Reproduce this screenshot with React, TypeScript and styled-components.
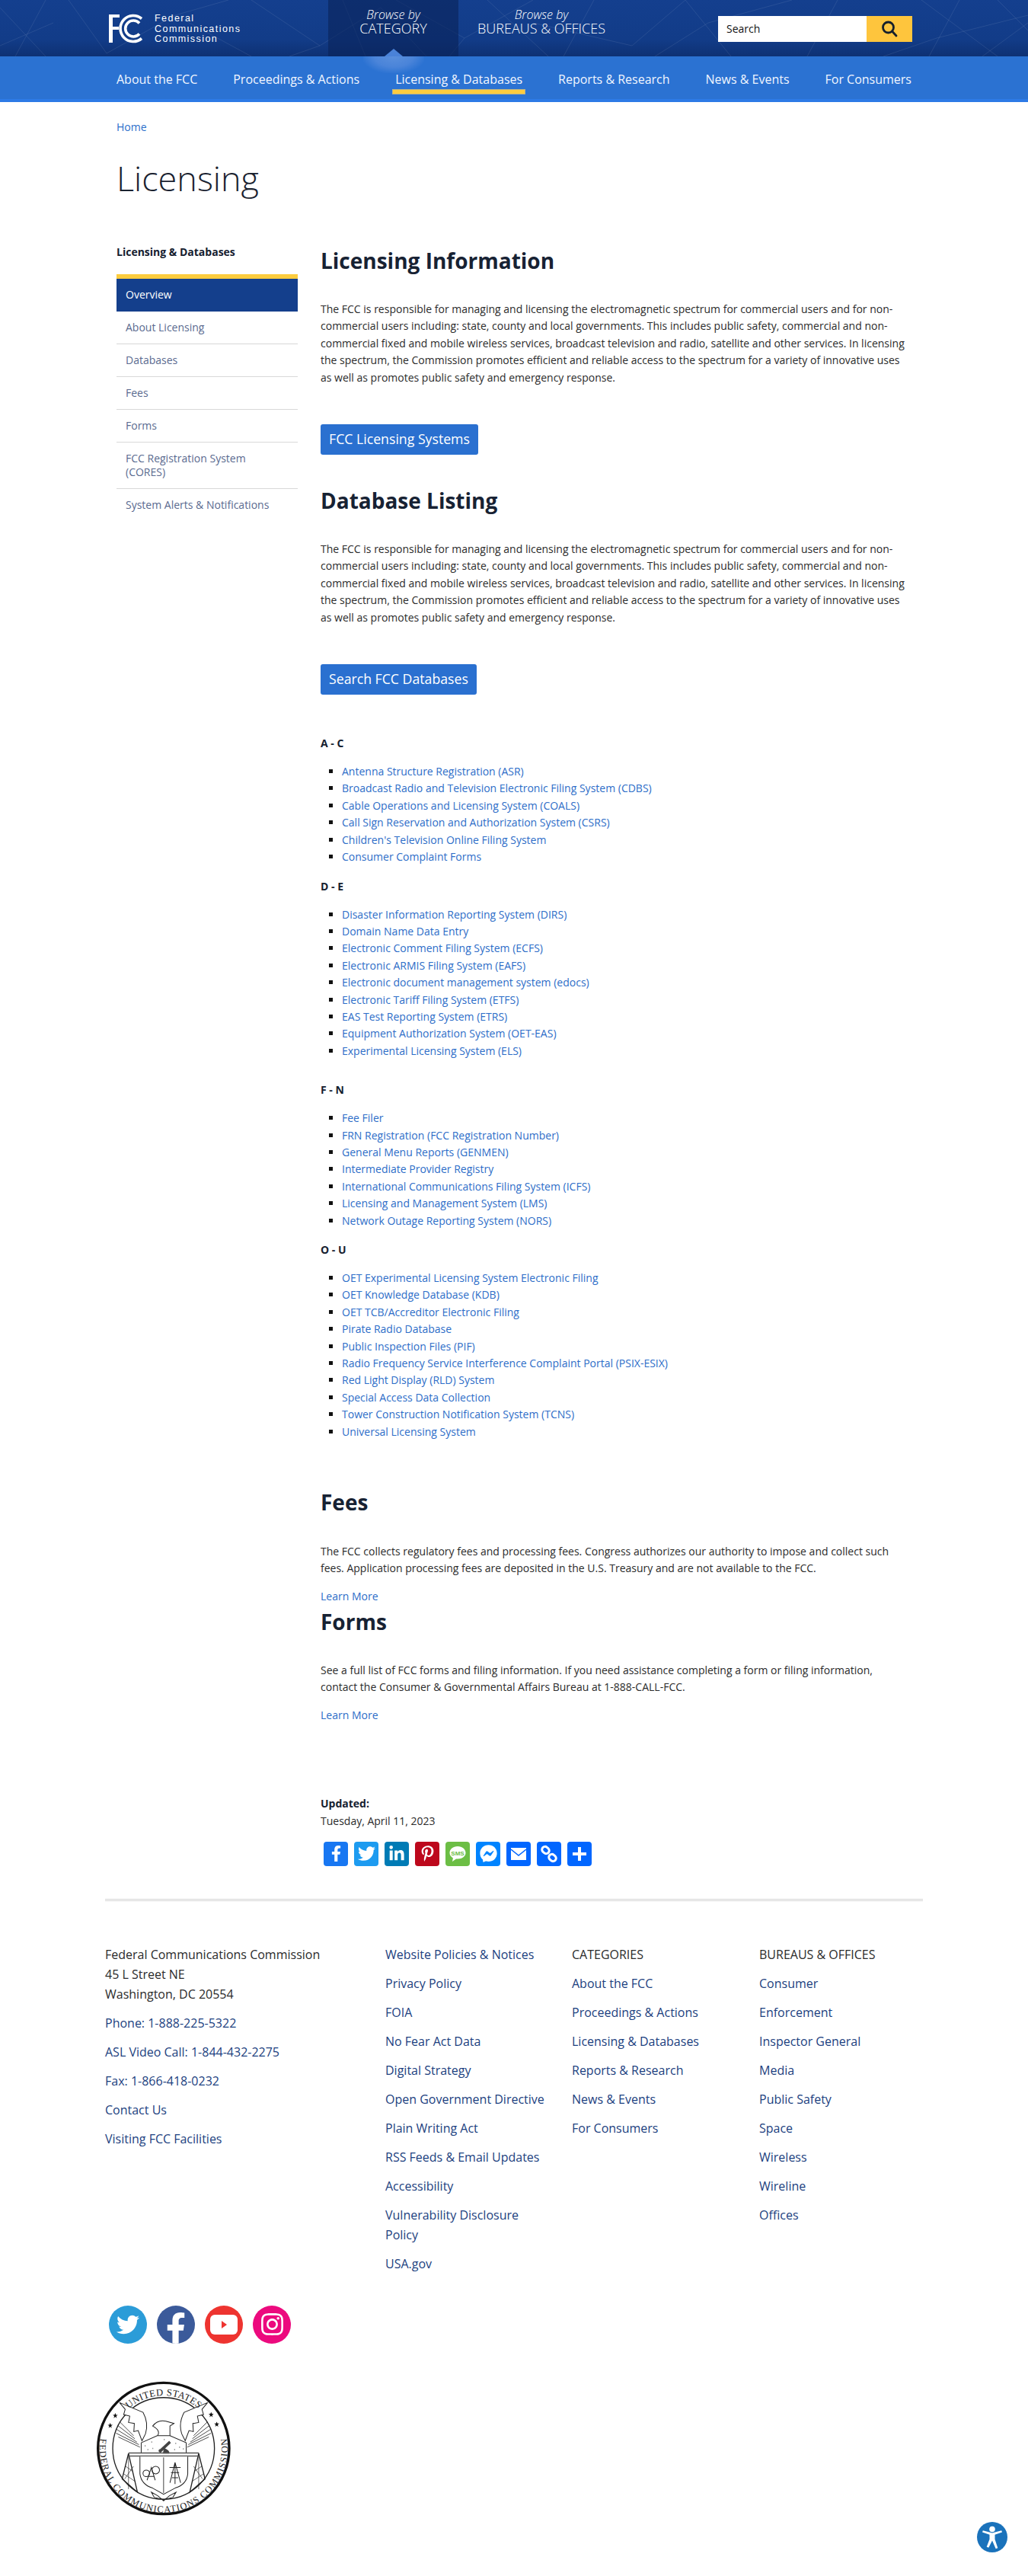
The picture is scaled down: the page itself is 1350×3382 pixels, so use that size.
import styled, { createGlobalStyle } from 'styled-components'
import { FaFacebookF, FaTwitter, FaLinkedinIn, FaPinterestP, FaFacebookMessenger, FaInstagram } from 'react-icons/fa'

const GlobalStyle = createGlobalStyle`
	html, body {
		margin: 0;
		padding: 0;
		background: #fff;
		font-family: 'Open Sans', sans-serif;
		font-size: 14px;
		line-height: 22.4px;
		color: #2b2b2b;
	}
	a {
		text-decoration: none;
		color: inherit;
	}
	ul {
		margin: 0;
		padding: 0;
	}
`

const Page = styled.div`
	width: 1350px;
	height: 3382px;
	overflow: hidden;
`

const TopBar = styled.header`
	position: relative;
	height: 74px;
	background: linear-gradient(180deg, #143f8e 0%, #123c88 70%, #0e3173 100%);
	display: flex;
	align-items: flex-start;
	overflow: hidden;
`

const Mesh = styled.svg`
	position: absolute;
	top: 0;
	left: 0;
`

const Logo = styled.a`
	position: relative;
	display: flex;
	gap: 14px;
	margin: 18px 0 0 143px;
	width: 288px;
	flex: none;
`

const LogoText = styled.div`
	font-family: 'Liberation Sans', sans-serif;
	font-size: 12.5px;
	line-height: 13.5px;
	letter-spacing: 1.45px;
	color: #fff;
`

const BrowseTab = styled.a<{ $active?: boolean }>`
	position: relative;
	flex: none;
	width: ${({ $active }) => ($active ? '171px' : '218px')};
	height: 74px;
	display: flex;
	flex-direction: column;
	align-items: center;
	padding-top: 9px;
	box-sizing: border-box;
	color: #fff;
	background: ${({ $active }) => ($active ? 'rgba(10, 36, 90, 0.62)' : 'transparent')};
`

const BrowseBy = styled.span`
	font-size: 16px;
	line-height: 20px;
	font-style: italic;
	font-weight: 300;
`

const BrowseName = styled.span`
	font-size: 18px;
	line-height: 17px;
	font-weight: 300;
	white-space: nowrap;
`

const TabArrow = styled.span`
	position: absolute;
	left: 50%;
	bottom: 0;
	margin-left: -12px;
	border-left: 12px solid transparent;
	border-right: 12px solid transparent;
	border-bottom: 10px solid #4a82d8;
`

const SearchBox = styled.form`
	position: relative;
	display: flex;
	width: 255px;
	height: 34px;
	margin: 21px 0 0 123px;
	flex: none;
`

const SearchField = styled.div`
	flex: 1;
	background: #fff;
	color: #111;
	font-size: 14px;
	line-height: 34px;
	padding-left: 11px;
`

const SearchButton = styled.button`
	width: 60px;
	border: 0;
	padding: 0;
	background: #fec53d;
	display: flex;
	align-items: center;
	justify-content: center;
`

const MainNav = styled.nav`
	position: relative;
	height: 60px;
	background: #2b72d2;
	border-bottom: 4px solid #2d7ae6;
	box-sizing: border-box;
	display: flex;
	justify-content: space-between;
	padding: 0 153px;
`

const NavGlow = styled.span`
	position: absolute;
	left: 477px;
	top: 0;
	width: 80px;
	height: 22px;
	background: radial-gradient(ellipse at 50% 0%, #5a8fdc 0%, #4a84d9 45%, rgba(43, 114, 210, 0) 75%);
`

const NavLink = styled.a<{ $active?: boolean }>`
	position: relative;
	font-size: 16px;
	line-height: 22px;
	padding-top: 19px;
	color: #f1f6ff;
	white-space: nowrap;

	${({ $active }) =>
		$active &&
		`
		&::after {
			content: '';
			position: absolute;
			left: -4px;
			right: -4px;
			top: 43px;
			height: 5px;
			background: #fdcc3e;
			border: 1px solid #b9b38a;
		}
	`}
`

const Breadcrumb = styled.div`
	margin: 22px 0 0 153px;
	color: #2c6fcb;
	font-size: 14px;
	line-height: 22px;
`

const PageTitle = styled.h1`
	margin: 27px 0 0 153px;
	font-size: 45px;
	line-height: 58px;
	font-weight: 300;
	color: #1a2230;
`

const Columns = styled.div`
	display: flex;
	gap: 30px;
	margin: 57px 0 0 153px;
	align-items: flex-start;
`

const SideBar = styled.aside`
	width: 238px;
	flex: none;
`

const SideTitle = styled.div`
	font-size: 14px;
	line-height: 22px;
	font-weight: 700;
	color: #15202f;
`

const SideList = styled.ul`
	list-style: none;
	margin-top: 18px;
	border-top: 6px solid #fdcc3e;
`

const SideItem = styled.li<{ $active?: boolean }>`
	padding: 12px 30px 12px 12px;
	font-size: 14px;
	line-height: 18px;
	color: ${({ $active }) => ($active ? '#fff' : '#5a6a8f')};
	background: ${({ $active }) => ($active ? '#143f8c' : 'transparent')};
	border-bottom: 1px solid ${({ $active }) => ($active ? '#143f8c' : '#d8d8d8')};

	&:last-child {
		border-bottom: 0;
	}
`

const Main = styled.main`
	width: 770px;
	padding-top: 2px;
`

const Heading = styled.h2<{ $top?: number }>`
	margin: ${({ $top }) => $top ?? 0}px 0 0;
	font-size: 28px;
	line-height: 40px;
	font-weight: 700;
	color: #172233;
`

const Para = styled.p<{ $top?: number }>`
	margin: ${({ $top }) => $top ?? 33}px 0 0;
	width: 768px;
`

const BlueButton = styled.a`
	display: inline-block;
	margin-top: 50px;
	height: 40px;
	padding: 0 11px;
	line-height: 38px;
	font-size: 17.7px;
	color: #fff;
	background: #2a70d0;
	border-radius: 3px;
`

const GroupTitle = styled.div<{ $top: number }>`
	margin-top: ${({ $top }) => $top}px;
	font-size: 14px;
	line-height: 22px;
	font-weight: 700;
	color: #15202f;
`

const LinkList = styled.ul`
	margin-top: 15px;
	padding-left: 28px;
	list-style: square;
`

const LinkItem = styled.li`
	color: #111;
	line-height: 22.4px;

	a {
		color: #2d6dc8;
	}
`

const LearnMore = styled.a`
	display: block;
	margin-top: 14px;
	line-height: 22px;
	color: #2d6dc8;
`

const UpdatedLabel = styled.div`
	margin-top: 94px;
	font-weight: 700;
	line-height: 22px;
	color: #15202f;
`

const UpdatedDate = styled.div`
	line-height: 22px;
	margin-top: 1px;
`

const ShareRow = styled.div`
	display: flex;
	gap: 8px;
	margin: 16px 0 0 4px;
`

const ShareIcon = styled.a<{ $bg: string }>`
	width: 32px;
	height: 32px;
	border-radius: 4px;
	background: ${({ $bg }) => $bg};
	color: #fff;
	display: flex;
	align-items: center;
	justify-content: center;
`

const Rule = styled.hr`
	width: 1074px;
	margin: 43px 0 0 138px;
	height: 1px;
	border: 0;
	border-top: 1px solid #d4d4d4;
	border-bottom: 1px solid #d4d4d4;
`

const FooterGrid = styled.footer`
	display: grid;
	grid-template-columns: 368px 245px 246px 215px;
	margin: 57px 0 0 138px;
	font-size: 16px;
	line-height: 26px;
`

const FooterCol = styled.ul`
	list-style: none;
	display: flex;
	flex-direction: column;
	gap: 12px;
	padding-right: 30px;
`

const FooterHead = styled.li`
	color: #2b2b2b;
`

const FooterLink = styled.li`
	color: #1c3f80;
`

const SocialRow = styled.div`
	display: flex;
	gap: 13px;
	margin: 42px 0 0 143px;
`

const SocialCircle = styled.a<{ $bg: string }>`
	width: 50px;
	height: 50px;
	border-radius: 50%;
	background: ${({ $bg }) => $bg};
	color: #fff;
	display: flex;
	align-items: center;
	justify-content: center;
	overflow: hidden;
`

const FacebookGlyph = styled(FaFacebookF)`
	margin-top: 10px;
`

const SealWrap = styled.div`
	margin: 49px 0 0 127px;
	width: 177px;
	height: 177px;
`

const AccessButton = styled.a`
	position: fixed;
	right: 27px;
	bottom: 31px;
	width: 40px;
	height: 40px;
`

const meshLines = [
	[0, 10, 60, 74], [60, 0, 20, 74], [90, 0, 140, 70], [140, 70, 230, 20], [230, 20, 330, 74], [230, 20, 300, 0],
	[330, 0, 420, 60], [420, 60, 500, 10], [380, 74, 420, 60], [500, 10, 560, 74], [520, 0, 610, 50], [610, 50, 700, 0],
	[610, 50, 590, 74], [640, 0, 720, 74], [700, 30, 830, 60], [780, 0, 740, 74], [830, 60, 900, 0], [900, 0, 960, 74],
	[860, 74, 930, 30], [930, 30, 1040, 0], [1100, 0, 1060, 74], [1210, 0, 1310, 74], [1260, 0, 1220, 74], [1350, 20, 1230, 50],
	[1310, 0, 1350, 40], [1290, 74, 1350, 30], [1160, 74, 1230, 50], [0, 60, 70, 30], [450, 0, 480, 74],
]

const categories = ['About the FCC', 'Proceedings & Actions', 'Licensing & Databases', 'Reports & Research', 'News & Events', 'For Consumers']
const sideItems = ['Overview', 'About Licensing', 'Databases', 'Fees', 'Forms', 'FCC Registration System (CORES)', 'System Alerts & Notifications']
const bodyText =
	'The FCC is responsible for managing and licensing the electromagnetic spectrum for commercial users and for non-commercial users including: state, county and local governments. This includes public safety, commercial and non-commercial fixed and mobile wireless services, broadcast television and radio, satellite and other services. In licensing the spectrum, the Commission promotes efficient and reliable access to the spectrum for a variety of innovative uses as well as promotes public safety and emergency response.'

const groups = [
	{
		title: 'A - C',
		top: 53,
		items: [
			'Antenna Structure Registration (ASR)',
			'Broadcast Radio and Television Electronic Filing System (CDBS)',
			'Cable Operations and Licensing System (COALS)',
			'Call Sign Reservation and Authorization System (CSRS)',
			"Children's Television Online Filing System",
			'Consumer Complaint Forms',
		],
	},
	{
		title: 'D - E',
		top: 16,
		items: [
			'Disaster Information Reporting System (DIRS)',
			'Domain Name Data Entry',
			'Electronic Comment Filing System (ECFS)',
			'Electronic ARMIS Filing System (EAFS)',
			'Electronic document management system (edocs)',
			'Electronic Tariff Filing System (ETFS)',
			'EAS Test Reporting System (ETRS)',
			'Equipment Authorization System (OET-EAS)',
			'Experimental Licensing System (ELS)',
		],
	},
	{
		title: 'F - N',
		top: 29,
		items: [
			'Fee Filer',
			'FRN Registration (FCC Registration Number)',
			'General Menu Reports (GENMEN)',
			'Intermediate Provider Registry',
			'International Communications Filing System (ICFS)',
			'Licensing and Management System (LMS)',
			'Network Outage Reporting System (NORS)',
		],
	},
	{
		title: 'O - U',
		top: 16,
		items: [
			'OET Experimental Licensing System Electronic Filing',
			'OET Knowledge Database (KDB)',
			'OET TCB/Accreditor Electronic Filing',
			'Pirate Radio Database',
			'Public Inspection Files (PIF)',
			'Radio Frequency Service Interference Complaint Portal (PSIX-ESIX)',
			'Red Light Display (RLD) System',
			'Special Access Data Collection',
			'Tower Construction Notification System (TCNS)',
			'Universal Licensing System',
		],
	},
]

const footerPolicy = [
	'Website Policies & Notices',
	'Privacy Policy',
	'FOIA',
	'No Fear Act Data',
	'Digital Strategy',
	'Open Government Directive',
	'Plain Writing Act',
	'RSS Feeds & Email Updates',
	'Accessibility',
	'Vulnerability Disclosure Policy',
	'USA.gov',
]
const footerBureaus = ['Consumer', 'Enforcement', 'Inspector General', 'Media', 'Public Safety', 'Space', 'Wireless', 'Wireline', 'Offices']

function FccMark() {
	return (
		<svg width="46" height="39" viewBox="0 0 46 39">
			<path d="M0 1h14v4H5v12h8v4H5v17H0z" fill="#fff" />
			<g fill="none" stroke="#fff" strokeWidth="3.6">
				<path d="M43 6.5A17 17 0 1 0 43 32.5" />
				<path d="M40 12.5A10.5 10.5 0 1 0 40 26.5" />
			</g>
		</svg>
	)
}

function Seal() {
	const wing = (
		<g fill="#fff" stroke="#222" strokeWidth="3">
			<path d="M170 490L262 528Q285 570 272 612L258 640L243 600L226 604L228 572L205 568L210 543L186 537L192 516Z" />
			<g strokeWidth="2.4">
				<path d="M170 565L225 620M163 580L230 632M158 595L238 645M156 610L246 655M165 625L250 665" />
			</g>
			<g fill="none" strokeWidth="4">
				<path d="M205 690L180 790L240 842L205 690" />
			</g>
			<path d="M193 740L222 760M186 770L232 800M205 690L205 830M190 790L225 740" fill="none" strokeWidth="2" />
		</g>
	)
	return (
		<svg width="177" height="177" viewBox="80 405 530 530">
			<defs>
				<path id="sealTop" d="M 135 670 A 208 208 0 0 1 551 670" />
				<path id="sealBottom" d="M 95 625 A 252 252 0 1 0 591 625" />
			</defs>
			<circle cx="343" cy="670" r="258" fill="#fff" stroke="#111" strokeWidth="10" />
			<circle cx="343" cy="670" r="200" fill="none" stroke="#222" strokeWidth="4" />
			<g>{wing}</g>
			<g transform="translate(686 0) scale(-1 1)">{wing}</g>
			<text fontFamily="'Liberation Serif', serif" fontSize="38" fill="#222">
				<textPath href="#sealTop" startOffset="50%" textAnchor="middle" textLength="300">
					UNITED STATES
				</textPath>
			</text>
			<text fontFamily="'Liberation Serif', serif" fontSize="37" fill="#222">
				<textPath href="#sealBottom" startOffset="50%" textAnchor="middle" textLength="870">
					FEDERAL COMMUNICATIONS COMMISSION
				</textPath>
			</text>
			<path d="M300 582Q320 556 352 563L384 572L368 582L368 622L318 622Q334 600 300 582Z" fill="#fff" stroke="#222" strokeWidth="3" />
			<path d="M255 648L318 620H368L432 648L432 688H255Z" fill="#fff" stroke="#222" strokeWidth="3" />
			<path d="M270 660h2M295 645h2M300 670h2M280 675h2M390 650h2M405 665h2M385 675h2M420 672h2M345 635h2M325 675h2" stroke="#333" strokeWidth="5" />
			<path d="M322 680L365 640L372 648L330 688ZM345 668Q370 680 365 690H340Z" fill="#444" />
			<path d="M205 688H482M205 700H482" stroke="#555" strokeWidth="4" />
			<path d="M250 702V770Q255 812 300 826L343 850L388 826Q434 812 438 770V702" fill="#fff" stroke="#222" strokeWidth="3" />
			<path d="M343 705V845" stroke="#444" strokeWidth="3" />
			<g fill="none" stroke="#222" strokeWidth="3">
				<circle cx="275" cy="768" r="13" />
				<circle cx="312" cy="755" r="15" />
				<path d="M278 795L295 745L310 795M284 780H304" />
				<path d="M388 725L368 805M388 725L410 805M366 745H410M372 765H404M376 785H400M388 725V810" />
			</g>
			<path d="M295 842L320 856L343 876L366 856L392 842L380 862L343 872L306 862Z" fill="#fff" stroke="#222" strokeWidth="3" />
			<g fill="#111">
				<path d="M153 531l3 7h7l-6 5 2 8-6-5-6 5 2-8-6-5h7z" />
				<path d="M133 570l3 7h7l-6 5 2 8-6-5-6 5 2-8-6-5h7z" />
				<path d="M530 527l3 7h7l-6 5 2 8-6-5-6 5 2-8-6-5h7z" />
				<path d="M552 565l3 7h7l-6 5 2 8-6-5-6 5 2-8-6-5h7z" />
			</g>
		</svg>
	)
}

function App() {
	return (
		<Page>
			<GlobalStyle />
			<TopBar>
				<Mesh width="1350" height="74">
					{meshLines.map(([x1, y1, x2, y2], i) => (
						<line key={i} x1={x1} y1={y1} x2={x2} y2={y2} stroke="#fff" strokeOpacity="0.09" />
					))}
				</Mesh>
				<Logo>
					<FccMark />
					<LogoText>
						Federal
						<br />
						Communications
						<br />
						Commission
					</LogoText>
				</Logo>
				<BrowseTab $active>
					<BrowseBy>Browse by</BrowseBy>
					<BrowseName>CATEGORY</BrowseName>
					<TabArrow />
				</BrowseTab>
				<BrowseTab>
					<BrowseBy>Browse by</BrowseBy>
					<BrowseName>BUREAUS &amp; OFFICES</BrowseName>
				</BrowseTab>
				<SearchBox>
					<SearchField>Search</SearchField>
					<SearchButton type="button" aria-label="Search">
						<svg width="22" height="22" viewBox="0 0 22 22" fill="none" stroke="#16202c" strokeWidth="2.8">
							<circle cx="9.5" cy="9" r="7" />
							<path d="M14.5 14l5.5 6" strokeLinecap="round" />
						</svg>
					</SearchButton>
				</SearchBox>
			</TopBar>

			<MainNav>
				<NavGlow />
				{categories.map((c) => (
					<NavLink key={c} $active={c === 'Licensing & Databases'}>
						{c}
					</NavLink>
				))}
			</MainNav>

			<Breadcrumb>Home</Breadcrumb>
			<PageTitle>Licensing</PageTitle>

			<Columns>
				<SideBar>
					<SideTitle>Licensing &amp; Databases</SideTitle>
					<SideList>
						{sideItems.map((s, i) => (
							<SideItem key={s} $active={i === 0}>
								{s}
							</SideItem>
						))}
					</SideList>
				</SideBar>

				<Main>
					<Heading>Licensing Information</Heading>
					<Para>{bodyText}</Para>
					<BlueButton>FCC Licensing Systems</BlueButton>
					<Heading $top={40}>Database Listing</Heading>
					<Para>{bodyText}</Para>
					<BlueButton>Search FCC Databases</BlueButton>

					{groups.map((g) => (
						<div key={g.title}>
							<GroupTitle $top={g.top}>{g.title}</GroupTitle>
							<LinkList>
								{g.items.map((item) => (
									<LinkItem key={item}>
										<a>{item}</a>
									</LinkItem>
								))}
							</LinkList>
						</div>
					))}

					<Heading $top={61}>Fees</Heading>
					<Para $top={34}>
						The FCC collects regulatory fees and processing fees. Congress authorizes our authority to impose and collect such fees. Application
						processing fees are deposited in the U.S. Treasury and are not available to the FCC.
					</Para>
					<LearnMore>Learn More</LearnMore>
					<Heading $top={2}>Forms</Heading>
					<Para>
						See a full list of FCC forms and filing information. If you need assistance completing a form or filing information, contact the Consumer
						&amp; Governmental Affairs Bureau at 1-888-CALL-FCC.
					</Para>
					<LearnMore>Learn More</LearnMore>

					<UpdatedLabel>Updated:</UpdatedLabel>
					<UpdatedDate>Tuesday, April 11, 2023</UpdatedDate>
					<ShareRow>
						<ShareIcon $bg="#1877f2">
							<FaFacebookF size={21} />
						</ShareIcon>
						<ShareIcon $bg="#1d9bf0">
							<FaTwitter size={23} />
						</ShareIcon>
						<ShareIcon $bg="#007bb5">
							<FaLinkedinIn size={22} />
						</ShareIcon>
						<ShareIcon $bg="#bd081c">
							<FaPinterestP size={21} />
						</ShareIcon>
						<ShareIcon $bg="#6cbe45">
							<svg width="26" height="26" viewBox="0 0 26 26">
								<path d="M13 3C6.9 3 2.5 6.7 2.5 11.5c0 3 1.7 5.4 4.4 6.9L6 23l5-3.6c.7.1 1.3.1 2 .1 6.1 0 10.5-3.4 10.5-8S19.1 3 13 3z" fill="#fff" />
								<text x="13" y="14.5" textAnchor="middle" fontFamily="'Liberation Sans', sans-serif" fontSize="8" fontWeight="700" fill="#6cbe45">
									SMS
								</text>
							</svg>
						</ShareIcon>
						<ShareIcon $bg="#0084ff">
							<FaFacebookMessenger size={23} />
						</ShareIcon>
						<ShareIcon $bg="#0166ff">
							<svg width="22" height="18" viewBox="0 0 22 18">
								<path d="M1 1h20v16H1z" fill="#fff" />
								<path d="M1 3l10 8 10-8" fill="none" stroke="#0166ff" strokeWidth="1.6" />
							</svg>
						</ShareIcon>
						<ShareIcon $bg="#0166ff">
							<svg width="24" height="24" viewBox="0 0 24 24" fill="none" stroke="#fff" strokeWidth="3">
								<rect x="2.5" y="3" width="10" height="8" rx="4" transform="rotate(40 7.5 7)" />
								<rect x="11.5" y="13" width="10" height="8" rx="4" transform="rotate(40 16.5 17)" />
							</svg>
						</ShareIcon>
						<ShareIcon $bg="#0166ff">
							<svg width="20" height="20" viewBox="0 0 20 20">
								<path d="M8 1h4v7h7v4h-7v7H8v-7H1V8h7z" fill="#fff" />
							</svg>
						</ShareIcon>
					</ShareRow>
				</Main>
			</Columns>

			<Rule />

			<FooterGrid>
				<FooterCol>
					<FooterHead>
						Federal Communications Commission
						<br />
						45 L Street NE
						<br />
						Washington, DC 20554
					</FooterHead>
					<FooterLink>Phone: 1-888-225-5322</FooterLink>
					<FooterLink>ASL Video Call: 1-844-432-2275</FooterLink>
					<FooterLink>Fax: 1-866-418-0232</FooterLink>
					<FooterLink>Contact Us</FooterLink>
					<FooterLink>Visiting FCC Facilities</FooterLink>
				</FooterCol>
				<FooterCol>
					{footerPolicy.map((p) => (
						<FooterLink key={p}>{p}</FooterLink>
					))}
				</FooterCol>
				<FooterCol>
					<FooterHead>CATEGORIES</FooterHead>
					{categories.map((c) => (
						<FooterLink key={c}>{c}</FooterLink>
					))}
				</FooterCol>
				<FooterCol>
					<FooterHead>BUREAUS &amp; OFFICES</FooterHead>
					{footerBureaus.map((b) => (
						<FooterLink key={b}>{b}</FooterLink>
					))}
				</FooterCol>
			</FooterGrid>

			<SocialRow>
				<SocialCircle $bg="#2b9cd8">
					<FaTwitter size={30} />
				</SocialCircle>
				<SocialCircle $bg="#3b5a9a">
					<FacebookGlyph size={42} />
				</SocialCircle>
				<SocialCircle $bg="#ee3430">
					<svg width="36" height="26" viewBox="0 0 36 26">
						<rect width="36" height="26" rx="6" fill="#fff" />
						<path d="M15 8l7 5-7 5z" fill="#ee3430" />
					</svg>
				</SocialCircle>
				<SocialCircle $bg="#ec0a7e">
					<FaInstagram size={33} />
				</SocialCircle>
			</SocialRow>

			<SealWrap>
				<Seal />
			</SealWrap>

			<AccessButton>
				<svg width="40" height="40" viewBox="0 0 40 40">
					<circle cx="20" cy="20" r="20" fill="#1a72bb" />
					<circle cx="20" cy="9.5" r="3.8" fill="#fff" />
					<path d="M7 13.5l.8-2.2L20 14.5l12.2-3.2.8 2.2-9.5 3.2v6l3.8 11.5-2.6 1L20 24.5 15.3 33.7l-2.6-1L16.5 22.7v-6z" fill="#fff" />
				</svg>
			</AccessButton>
		</Page>
	)
}

export default App
